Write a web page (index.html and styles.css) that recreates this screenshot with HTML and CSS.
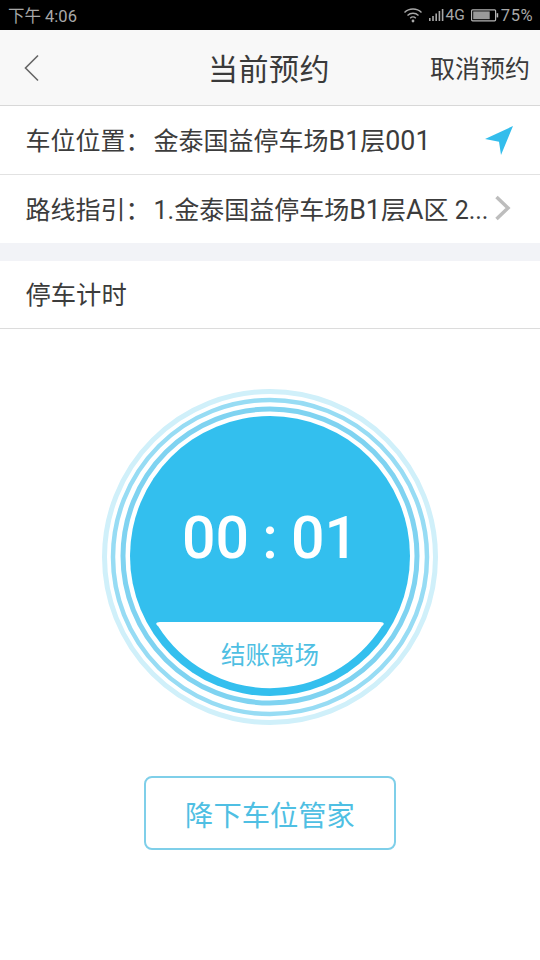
FILE: index.html
```html
<!DOCTYPE html>
<html lang="zh-CN">
<head>
<meta charset="utf-8">
<title>当前预约</title>
<link rel="stylesheet" href="styles.css">
</head>
<body>
<div class="status">
  <span class="status-time">下午 4:06</span>
  <div class="status-right">
    <svg class="ic-wifi" width="20" height="16" viewBox="0 0 20 16"><g fill="none" stroke="#a8a8a8" stroke-width="1.4"><path d="M1.5 5.5a12 12 0 0 1 17 0"/><path d="M4.5 8.5a8 8 0 0 1 11 0"/><path d="M7.2 11.2a4 4 0 0 1 5.6 0"/></g><circle cx="10" cy="14" r="1.4" fill="#a8a8a8"/></svg>
    <svg class="ic-signal" width="17" height="14" viewBox="0 0 17 14"><g fill="#a8a8a8"><rect x="0" y="10" width="1.6" height="3"/><rect x="3.2" y="8" width="1.6" height="5"/><rect x="6.4" y="5.5" width="1.6" height="7.5"/><rect x="9.6" y="3" width="1.6" height="10"/><rect x="12.8" y="1" width="1.6" height="12"/></g></svg>
    <span class="status-net">4G</span>
    <svg class="ic-batt" width="28" height="13" viewBox="0 0 28 13"><rect x="0.6" y="0.8" width="24" height="11" rx="1" fill="none" stroke="#b5b5b5" stroke-width="1.2"/><rect x="2.2" y="2.4" width="16.5" height="7.8" fill="#9a9a9a"/><rect x="25.6" y="4.2" width="1.6" height="4.2" fill="#b5b5b5"/></svg>
    <span class="status-pct">75%</span>
  </div>
</div>
<header class="nav">
  <svg class="nav-back" width="18" height="28" viewBox="0 0 18 28"><path d="M15 1.5 2.5 14 15 26.5" fill="none" stroke="#666" stroke-width="1.6"/></svg>
  <h1 class="nav-title">当前预约</h1>
  <span class="nav-action">取消预约</span>
</header>
<section class="list">
  <div class="row row-line">
    <span class="row-text">车位位置：<span class="gap"></span>金泰国益停车场<span class="lat">B1</span>层<span class="lat">001</span></span>
    <svg class="ic-nav" width="30" height="30" viewBox="0 0 30 30"><path d="M1 14 29 1 17 30 15 16.700Z" fill="#33bdec"/></svg>
  </div>
  <div class="row">
    <span class="row-text"><span>路线指引：</span><span class="gap"></span>1.金泰国益停车场<span class="lat">B1</span>层<span class="lat">A</span>区 2...</span>
    <svg class="ic-chev" width="18" height="26" viewBox="0 0 18 26"><path d="M2.500 2 14 13 2.500 24" fill="none" stroke="#bdbdbd" stroke-width="3.500"/></svg>
  </div>
</section>
<div class="divider"></div>
<div class="row row-title">停车计时</div>
<main class="timer-area">
  <div class="dial">
    <svg class="dial-art" width="340" height="340" viewBox="0 0 340 340">
      <circle cx="170" cy="171" r="165.500" fill="none" stroke="#d0f0fa" stroke-width="5"/>
      <circle cx="170" cy="171" r="157" fill="none" stroke="#97dcf4" stroke-width="4.500"/>
      <circle cx="170" cy="170" r="147" fill="none" stroke="#7fd3f1" stroke-width="5"/>
      <circle cx="170" cy="170" r="140" fill="#33bfee"/>
      <path d="M60 236H280C284 236 285 238 282 240A132 132 0 0 1 58 240C55 238 56 236 60 236Z" fill="#fff"/>
    </svg>
    <div class="dial-time">00 : 01</div>
    <div class="dial-label">结账离场</div>
  </div>
  <button class="drop-btn">降下车位管家</button>
</main>
</body>
</html>
```
FILE: styles.css
```css
* { box-sizing: border-box; }
html, body { margin: 0; padding: 0; }
body {
  width: 540px;
  height: 960px;
  overflow: hidden;
  background: #fff;
  color: #333;
  font-family: Roboto, "Noto Sans CJK SC", sans-serif;
}
.status {
  height: 30px;
  background: #000;
  color: #a8a8a8;
  display: flex;
  align-items: center;
  justify-content: space-between;
  padding: 0 7px 0 8px;
  font-size: 16.500px;
}
.status-right { display: flex; align-items: center; }
.ic-wifi { margin-right: 6px; }
.ic-signal { margin-right: 0; }
.status-net { font-size: 15.500px; margin-right: 6px; }
.ic-batt { margin-right: 2px; }
.status-pct { letter-spacing: .5px; }
.nav {
  height: 76px;
  background: #f8f8f8;
  border-bottom: 1px solid #d8d8d8;
  display: flex;
  align-items: center;
  justify-content: center;
  position: relative;
}
.nav-back { position: absolute; left: 23px; top: 24px; }
.nav-title {
  margin: 0;
  font-size: 30px;
  font-weight: 400;
  color: #3a3a3a;
  line-height: 1;
  position: relative;
  top: 2px;
  left: -1px;
  letter-spacing: .5px;
}
.nav-action {
  position: absolute;
  right: 10px;
  top: 26px;
  font-size: 25px;
  line-height: 28px;
  color: #3a3a3a;
}
.row {
  height: 68px;
  display: flex;
  align-items: center;
  justify-content: space-between;
  padding: 0 26px 2px 25.500px;
  font-size: 25px;
  color: #3c3c3c;
  background: #fff;
}
.row-line { height: 69px; border-bottom: 1px solid #e2e2e2; }
.row-text { white-space: nowrap; }
.lat { font-size: 26.800px; }
.gap { display: inline-block; width: 3px; }
.ic-nav { position: relative; top: 1px; }
.ic-chev { margin-right: 2.500px; }
.divider { height: 18px; background: #f2f3f7; }
.row-title { border-bottom: 1px solid #dcdcdc; height: 68px; padding-bottom: 4px; font-size: 25.300px; }
.timer-area {
  display: flex;
  flex-direction: column;
  align-items: center;
  padding-top: 57px;
}
.dial { position: relative; width: 340px; height: 340px; }
.dial-art { display: block; }
.dial-time {
  position: absolute;
  left: 0;
  right: 0;
  top: 114px;
  text-align: center;
  color: #fff;
  font-size: 59px;
  font-weight: 500;
  line-height: 76px;
  word-spacing: -1.500px;
}
.dial-label {
  position: absolute;
  left: 0;
  right: 0;
  top: 254px;
  text-align: center;
  color: #4fbfe3;
  font-size: 24.500px;
  line-height: 32px;
}
.drop-btn {
  margin-top: 50px;
  width: 252px;
  height: 74px;
  border: 2px solid #7fcfe9;
  border-radius: 8px;
  background: #fff;
  color: #4fbfe3;
  font-family: inherit;
  font-size: 28.300px;
  padding: 0;
}
```
